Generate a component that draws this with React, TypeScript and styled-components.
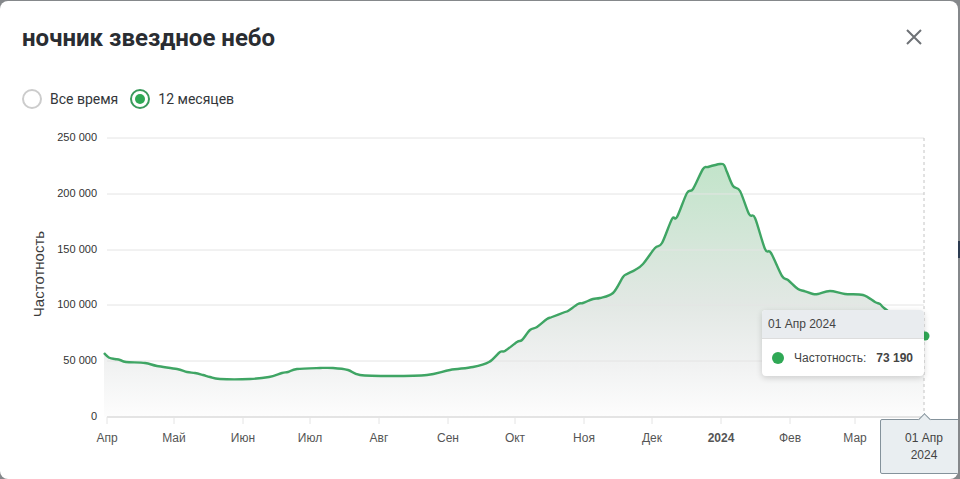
import React from "react"
import styled, { createGlobalStyle } from "styled-components"

const GlobalStyle = createGlobalStyle`
  html, body {
    margin: 0;
    padding: 0;
    overflow: hidden;
  }
`

// styled components
const Page = styled.div`
  width: 960px;
  height: 479px;
  padding-top: 1px;
  box-sizing: border-box;
  overflow: hidden;
  background: linear-gradient(
    to bottom,
    #85888b 0,
    #85888b 241px,
    #2c3b50 241px,
    #2c3b50 258px,
    #85888b 258px
  );
`

const Modal = styled.div`
  width: 958px;
  height: 478px;
  background: #fff;
  border-radius: 8px;
  display: flex;
  flex-direction: column;
  overflow: hidden;
  font-family: "Roboto", "Liberation Sans", sans-serif;
`

const Header = styled.div`
  height: 73px;
  flex: none;
  display: flex;
  align-items: center;
  justify-content: space-between;
  padding: 0 32px 0 22px;
`

const Title = styled.h2`
  margin: 0;
  font-size: 24px;
  font-weight: 700;
  color: #2a2d32;
`

const CloseButton = styled.button`
  width: 24px;
  height: 24px;
  margin-top: -1px;
  padding: 0;
  border: 0;
  background: none;
  color: #6e7276;
`

const RangeRow = styled.div`
  height: 50px;
  flex: none;
  display: flex;
  align-items: center;
  gap: 12px;
  padding-left: 22px;
`

const RangeOption = styled.label`
  display: flex;
  align-items: center;
  gap: 8px;
  font-size: 14px;
  color: #33363a;
`

const RadioMark = styled.span<{ $checked?: boolean }>`
  width: 20px;
  height: 20px;
  box-sizing: border-box;
  border-radius: 50%;
  border: 2px solid ${(p) => (p.$checked ? "#3a9a5c" : "#cccccc")};
  display: flex;
  align-items: center;
  justify-content: center;

  &::after {
    content: "";
    display: ${(p) => (p.$checked ? "block" : "none")};
    width: 10px;
    height: 10px;
    border-radius: 50%;
    background: #2fa855;
  }
`

const ChartArea = styled.div`
  position: relative;
  flex: 1;
`

const ChartSvg = styled.svg`
  display: block;
  width: 958px;
  height: 355px;
`

const TickLabel = styled.text`
  font-family: "Liberation Sans", Arial, sans-serif;
  font-size: 11px;
  fill: #333;
`

const MonthLabel = styled.text<{ $bold?: boolean }>`
  font-family: "Liberation Sans", Arial, sans-serif;
  font-size: 12px;
  font-weight: ${(p) => (p.$bold ? 700 : 400)};
  fill: #555;
`

const AxisTitle = styled.text`
  font-family: "Liberation Sans", Arial, sans-serif;
  font-size: 15px;
  fill: #3c3c3c;
`

const Tooltip = styled.div`
  position: absolute;
  left: 762px;
  top: 186px;
  width: 162px;
  border-radius: 4px;
  overflow: hidden;
  background: #fff;
  box-shadow: 0 2px 6px rgba(0, 0, 0, 0.16);
  font-family: "Liberation Sans", Arial, sans-serif;
  font-size: 12px;
  color: #444;
`

const TooltipHead = styled.div`
  height: 29px;
  line-height: 28px;
  padding-left: 6px;
  box-sizing: border-box;
  background: #e9ecef;
  border-bottom: 1px solid #dddddd;
`

const TooltipBody = styled.div`
  height: 37px;
  display: flex;
  align-items: center;
  padding: 0 11px 0 10px;
`

const TooltipDot = styled.span`
  width: 12px;
  height: 12px;
  border-radius: 50%;
  background: #2fa855;
  margin-right: 10px;
`

const TooltipValue = styled.b`
  margin-left: auto;
`

const DateLabel = styled.div`
  position: absolute;
  left: 880px;
  top: 295px;
  width: 88px;
  height: 55px;
  box-sizing: border-box;
  padding-top: 10px;
  border: 1px solid #84929b;
  border-radius: 2px;
  background: #e9eef1;
  font-family: "Liberation Sans", Arial, sans-serif;
  font-size: 12px;
  line-height: 17px;
  text-align: center;
  color: #444;

  &::before {
    content: "";
    position: absolute;
    left: 39px;
    top: -5px;
    width: 8px;
    height: 8px;
    background: #e9eef1;
    border-left: 1px solid #84929b;
    border-top: 1px solid #84929b;
    transform: rotate(45deg);
  }
`

// x, y of the curve in page pixels
const points: [number, number][] = [
  [104, 353], [107, 356], [110, 358], [115, 359], [120, 360], [126, 362], [145, 363], [157, 366],
  [177, 369], [187, 372], [195, 373], [203, 375], [210, 377], [220, 379], [250, 379], [269, 377],
  [282, 373], [288, 372], [297, 369], [320, 368], [333, 368], [348, 370], [360, 375], [392, 376],
  [427, 375], [450, 370], [473, 367], [489, 362], [500, 352], [505, 351], [517, 342], [522, 340],
  [530, 330], [537, 327], [547, 319], [552, 317], [565, 312], [568, 311], [578, 304], [583, 303],
  [593, 299], [600, 298], [613, 293], [623, 277], [627, 274], [635, 270], [643, 264], [655, 248],
  [662, 243], [672, 219], [677, 217], [687, 193], [693, 189], [703, 169], [708, 167], [720, 164], [724, 165], [727, 172],
  [733, 186], [740, 191], [749, 214], [755, 218], [765, 249], [771, 253], [782, 276], [788, 280],
  [798, 289], [804, 291], [813, 294], [818, 294], [830, 291], [845, 294], [863, 295], [875, 302],
  [880, 304], [884, 308], [900, 320], [924, 336],
]

const curve = points.reduce((d, [x, y], i) => {
  if (i === 0) return `M${x} ${y}`
  const p0 = points[Math.max(i - 2, 0)]
  const p1 = points[i - 1]
  const p3 = points[Math.min(i + 1, points.length - 1)]
  const c1 = `${p1[0] + (x - p0[0]) / 6} ${p1[1] + (y - p0[1]) / 6}`
  const c2 = `${x - (p3[0] - p1[0]) / 6} ${y - (p3[1] - p1[1]) / 6}`
  return `${d}C${c1} ${c2} ${x} ${y}`
}, "")

const yTicks = [
  { y: 138, label: "250 000" },
  { y: 194, label: "200 000" },
  { y: 250, label: "150 000" },
  { y: 305, label: "100 000" },
  { y: 361, label: "50 000" },
  { y: 417, label: "0" },
]

const months = [
  { x: 107, label: "Апр" },
  { x: 174, label: "Май" },
  { x: 243, label: "Июн" },
  { x: 310, label: "Июл" },
  { x: 379, label: "Авг" },
  { x: 448, label: "Сен" },
  { x: 515, label: "Окт" },
  { x: 584, label: "Ноя" },
  { x: 652, label: "Дек" },
  { x: 721, label: "2024", bold: true },
  { x: 790, label: "Фев" },
  { x: 855, label: "Мар" },
]

const Chart = () => {
  return (
    <ChartSvg viewBox="0 124 958 355">
      <defs>
        <linearGradient id="areaFill" gradientUnits="userSpaceOnUse" x1="0" y1="164" x2="0" y2="417">
          <stop offset="0" stopColor="#c2e4ca" />
          <stop offset="0.55" stopColor="#e2e8e4" />
          <stop offset="0.8" stopColor="#f1f2f2" />
          <stop offset="1" stopColor="#fdfdfd" />
        </linearGradient>
      </defs>
      <path d={`${curve}L924 417L104 417Z`} fill="url(#areaFill)" />
      {yTicks.map((t) => (
        <g key={t.y}>
          <line x1="107" x2="924" y1={t.y} y2={t.y} stroke="#e4e4e4" strokeWidth={t.y === 417 ? 2 : 1} />
          <TickLabel x="97" y={t.y + 3} textAnchor="end">
            {t.label}
          </TickLabel>
        </g>
      ))}
      {months.map((m) => (
        <g key={m.x}>
          <line x1={m.x} x2={m.x} y1="417" y2="424" stroke="#e4e4e4" />
          <MonthLabel x={m.x} y="442" textAnchor="middle" $bold={m.bold}>
            {m.label}
          </MonthLabel>
        </g>
      ))}
      <AxisTitle x="44" y="274" textAnchor="middle" transform="rotate(-90 44 274)">
        Частотность
      </AxisTitle>
      <line x1="924" x2="924" y1="138" y2="417" stroke="#c4c4c4" strokeDasharray="3 3" />
      <path d={curve} fill="none" stroke="#3fa564" strokeWidth="2.4" strokeLinejoin="round" />
      <circle cx="925" cy="336" r="4.5" fill="#2fa855" />
    </ChartSvg>
  )
}

const App = () => {
  return (
    <Page>
      <GlobalStyle />
      <Modal>
        <Header>
          <Title>ночник звездное небо</Title>
          <CloseButton aria-label="Закрыть">
            <svg width="24" height="24" viewBox="0 0 24 24" fill="none" stroke="currentColor" strokeWidth="2">
              <path d="M5 5L19 19M19 5L5 19" />
            </svg>
          </CloseButton>
        </Header>
        <RangeRow>
          <RangeOption>
            <RadioMark />
            Все время
          </RangeOption>
          <RangeOption>
            <RadioMark $checked />
            12 месяцев
          </RangeOption>
        </RangeRow>
        <ChartArea>
          <Chart />
          <Tooltip>
            <TooltipHead>01 Апр 2024</TooltipHead>
            <TooltipBody>
              <TooltipDot />
              Частотность:
              <TooltipValue>73 190</TooltipValue>
            </TooltipBody>
          </Tooltip>
          <DateLabel>
            01 Апр
            <br />
            2024
          </DateLabel>
        </ChartArea>
      </Modal>
    </Page>
  )
}

export default App
